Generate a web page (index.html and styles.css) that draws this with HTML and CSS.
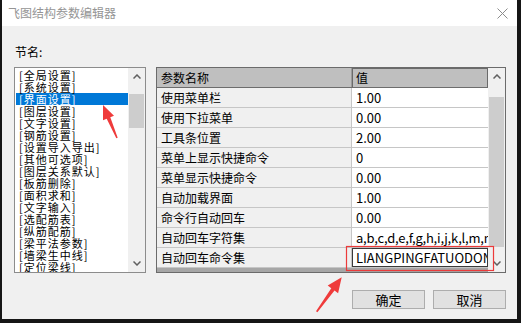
FILE: index.html
```html
<!DOCTYPE html>
<html lang="zh-CN">
<head>
<meta charset="utf-8">
<title>飞图结构参数编辑器</title>
<link rel="stylesheet" href="styles.css">
</head>
<body>
<div class="window">
  <div class="titlebar">
    <span class="title">飞图结构参数编辑器</span>
    <svg class="close" width="11" height="11" viewBox="0 0 11 11"><path d="M0.5 0.5L10.5 10.5M10.5 0.5L0.5 10.5" stroke="#8c8c8c" stroke-width="1" fill="none"/></svg>
  </div>
  <div class="content">
    <div class="label">节名:</div>
    <div class="main">
      <div class="listbox">
        <ul class="items">
          <li>[全局设置]</li>
          <li>[系统设置]</li>
          <li class="sel">[界面设置]</li>
          <li>[图层设置]</li>
          <li>[文字设置]</li>
          <li>[钢筋设置]</li>
          <li>[设置导入导出]</li>
          <li>[其他可选项]</li>
          <li>[图层关系默认]</li>
          <li>[板筋删除]</li>
          <li>[面积求和]</li>
          <li>[文字输入]</li>
          <li>[选配筋表]</li>
          <li>[纵筋配筋]</li>
          <li>[梁平法参数]</li>
          <li>[墙梁生中线]</li>
          <li>[定位梁线]</li>
        </ul>
        <div class="vscroll">
          <div class="sarrow"><svg width="8" height="5" viewBox="0 0 8 5"><path d="M0.5 4.5L4 1L7.5 4.5" stroke="#606060" stroke-width="1.5" fill="none"/></svg></div>
          <div class="track"><div class="thumb list-thumb"></div></div>
          <div class="sarrow"><svg width="8" height="5" viewBox="0 0 8 5"><path d="M0.5 0.5L4 4L7.5 0.5" stroke="#606060" stroke-width="1.5" fill="none"/></svg></div>
        </div>
      </div>
      <div class="grid">
        <div class="table">
          <div class="row head"><div class="c1">参数名称</div><div class="c2">值</div></div>
          <div class="row"><div class="c1">使用菜单栏</div><div class="c2">1.00</div></div>
          <div class="row"><div class="c1">使用下拉菜单</div><div class="c2">0.00</div></div>
          <div class="row"><div class="c1">工具条位置</div><div class="c2">2.00</div></div>
          <div class="row"><div class="c1">菜单上显示快捷命令</div><div class="c2">0</div></div>
          <div class="row"><div class="c1">菜单显示快捷命令</div><div class="c2">0.00</div></div>
          <div class="row"><div class="c1">自动加载界面</div><div class="c2">1.00</div></div>
          <div class="row"><div class="c1">命令行自动回车</div><div class="c2">0.00</div></div>
          <div class="row"><div class="c1">自动回车字符集</div><div class="c2 chars">a,b,c,d,e,f,g,h,i,j,k,l,m,n,o,p</div></div>
          <div class="row"><div class="c1">自动回车命令集</div><div class="c2 editing"><div class="edit">LIANGPINGFATUODONGCOPY</div></div></div>
          <div class="hstrip"></div>
        </div>
        <div class="vscroll">
          <div class="sarrow"><svg width="8" height="5" viewBox="0 0 8 5"><path d="M0.5 4.5L4 1L7.5 4.5" stroke="#606060" stroke-width="1.5" fill="none"/></svg></div>
          <div class="track"><div class="thumb grid-thumb"></div></div>
          <div class="sarrow"><svg width="8" height="5" viewBox="0 0 8 5"><path d="M0.5 0.5L4 4L7.5 0.5" stroke="#606060" stroke-width="1.5" fill="none"/></svg></div>
        </div>
      </div>
    </div>
    <div class="buttons">
      <button class="btn">确定</button>
      <button class="btn">取消</button>
    </div>
  </div>
  <svg class="annot" width="515" height="319" viewBox="0 0 515 319">
    <rect x="344.5" y="246.5" width="147" height="24" fill="none" stroke="#ec3a3a" stroke-width="1.2"/>
    <polygon fill="#ef3b3b" points="101,105 112,115.7 108.3,117.2 115.7,137.7 114.3,138.3 104.7,118.8 101,120.3"/>
    <polygon fill="#ef3b3b" points="339.7,277.3 336.1,293.2 332.5,290.6 315.4,312.2 314,311.2 329.3,288.2 325.7,285.6"/>
  </svg>
</div>
</body>
</html>
```

FILE: styles.css
```css
* { box-sizing: border-box; }

html, body {
  margin: 0;
  padding: 0;
}

body {
  background: #161616;
  width: 521px;
  height: 323px;
  overflow: hidden;
  font-family: "Noto Sans CJK SC", "Noto Sans", sans-serif;
  font-size: 12px;
  color: #000;
}

.window {
  position: relative;
  margin-left: 2px;
  width: 515px;
  height: 319px;
  background: #f0f0f0;
}

.titlebar {
  height: 26px;
  background: #fff;
  display: flex;
  align-items: center;
  justify-content: space-between;
  padding: 0 9px 0 6px;
}

.title {
  font-size: 12px;
  line-height: 14px;
  color: #959595;
}

.close { display: block; }

.content {
  padding: 19px 11px 0 12px;
}

.label {
  height: 14px;
  line-height: 14px;
  font-size: 12px;
  margin-bottom: 8px;
  padding-left: 1px;
}

.main {
  display: flex;
  gap: 10px;
  height: 206px;
}

.listbox {
  width: 132px;
  height: 206px;
  border: 1px solid #8c8c8c;
  background: #fff;
  display: flex;
}

.items {
  flex: 1;
  margin: 0;
  padding: 1px 0 0 1px;
  list-style: none;
  overflow: hidden;
}

.items li {
  height: 12px;
  line-height: 12px;
  font-size: 11px;
  letter-spacing: 1px;
  padding-left: 3px;
  white-space: nowrap;
}

.items li.sel {
  background: #0078d7;
  color: #fff;
}

.vscroll {
  width: 17px;
  background: #f0f0f0;
  display: flex;
  flex-direction: column;
}

.sarrow {
  height: 17px;
  display: flex;
  align-items: center;
  justify-content: center;
}

.sarrow svg { display: block; }

.track {
  flex: 1;
  padding: 0 1px;
}

.thumb {
  background: #cdcdcd;
}

.list-thumb {
  margin-top: 9px;
  height: 34px;
}

.grid-thumb {
  margin-top: 12px;
  height: 150px;
}

.grid {
  width: 350px;
  height: 206px;
  border: 1px solid #6b6b6b;
  background: #fff;
  display: flex;
}

.table {
  flex: 1;
  display: flex;
  flex-direction: column;
  overflow: hidden;
}

.row {
  display: flex;
  height: 20px;
  border-bottom: 1px solid #c6c6c6;
  flex-shrink: 0;
}

.row .c1 {
  width: 195px;
  background: #f0f0f0;
  border-right: 1px solid #c6c6c6;
  padding-left: 4px;
  line-height: 19px;
  font-size: 12px;
  white-space: nowrap;
}

.row .c2 {
  flex: 1;
  background: #fff;
  padding-left: 4px;
  line-height: 19px;
  font-size: 13px;
  white-space: nowrap;
  overflow: hidden;
}

.row .c2.chars {
  letter-spacing: -0.2px;
}

.row.head {
  background: #bfbfbf;
  border-bottom: 1px solid #6d6d6d;
}

.row.head .c1 {
  background: #bfbfbf;
  border-right: 1px solid #9a9a9a;
}

.row.head .c2 {
  background: #bfbfbf;
  font-size: 12px;
  border: 1px solid #6a6a6a;
  border-bottom: none;
  line-height: 17px;
  padding-left: 3px;
}

.row .c2.editing {
  padding: 0;
}

.edit {
  height: 19px;
  border: 1px solid #3a3a3a;
  background: #fff;
  padding-left: 3px;
  line-height: 17px;
  font-size: 13px;
  overflow: hidden;
  white-space: nowrap;
}

.hstrip {
  height: 4px;
  background: #a6a6a6;
  flex-shrink: 0;
}

.buttons {
  display: flex;
  justify-content: flex-end;
  gap: 8px;
  margin-top: 17px;
}

.btn {
  width: 73px;
  height: 19px;
  padding: 0;
  margin: 0;
  background: #e1e1e1;
  border: 1px solid #adadad;
  font-family: "Noto Sans CJK SC", sans-serif;
  font-size: 13px;
  line-height: 17px;
  color: #000;
}

.annot {
  position: absolute;
  left: 0;
  top: 0;
  pointer-events: none;
}
```
